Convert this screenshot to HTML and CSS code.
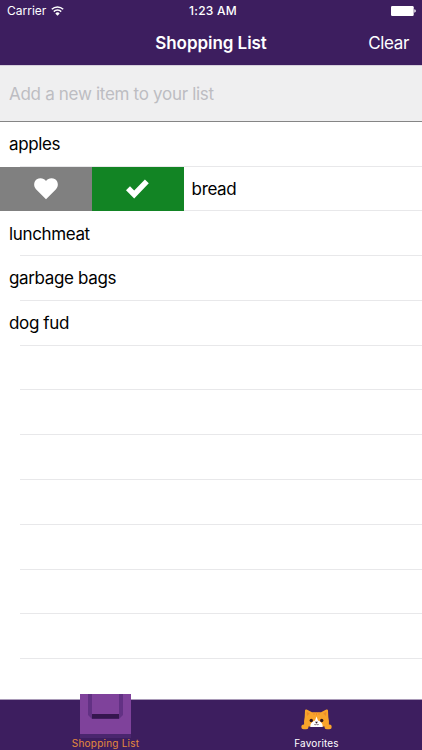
FILE: index.html
```html
<!DOCTYPE html>
<html lang="en">
<head>
  <meta charset="UTF-8" />
  <meta name="viewport" content="width=device-width, initial-scale=1.0"/>
  <title>Shopping List</title>
  <link rel="stylesheet" href="styles.css">
</head>
<body>
  <div class="app">
    <header>
      <div class="status-bar">
        <div class="carrier">
          <span class="carrier-name">Carrier</span>
          <svg class="wifi" width="13" height="10" viewBox="0 0 13 10">
            <path d="M.8 3.3a8.2 8.2 0 0 1 11.4 0M2.8 5.6a5.3 5.3 0 0 1 7.4 0" fill="none" stroke="#fff" stroke-width="1.5"/>
            <path d="M6.5 9.7L4.3 7.4a3.2 3.2 0 0 1 4.4 0z" fill="#fff"/>
          </svg>
        </div>
        <span class="time">1:23 AM</span>
        <svg class="battery" width="25" height="10" viewBox="0 0 25 10">
          <rect width="22.7" height="10" rx="1.2" fill="#fff"/>
          <path d="M23.3 3.3q1.5.3 1.5 1.7t-1.5 1.7z" fill="#fff"/>
        </svg>
      </div>
      <div class="nav-bar">
        <h1>Shopping List</h1>
        <button class="clear">Clear</button>
      </div>
    </header>

    <input type="text" class="new-item" placeholder="Add a new item to your list" />

    <ul class="list">
      <li>apples</li>
      <li class="swiped">
        <div class="action favorite">
          <svg width="24" height="22" viewBox="0 0 24 22">
            <path d="M12 21.3L2 11.3C-.8 8.3-.3 3.5 2.8 1.3 5.9-.7 9.9.1 12 3c2.1-2.9 6.1-3.7 9.2-1.7 3.1 2.2 3.6 7 .8 10z" fill="#fff"/>
          </svg>
        </div>
        <div class="action done">
          <svg width="23" height="20" viewBox="0 0 23 20">
            <path d="M0 11.3L4 7.3 8.2 11.5 18.9.5 22.8 4.3 8.2 19.5z" fill="#fff"/>
          </svg>
        </div>
        <span>bread</span>
      </li>
      <li>lunchmeat</li>
      <li>garbage bags</li>
      <li>dog fud</li>
      <li></li>
      <li></li>
      <li></li>
      <li></li>
      <li></li>
      <li></li>
      <li></li>
    </ul>

    <nav class="tab-bar">
      <a class="tab active">
        <svg class="bag" width="51" height="44" viewBox="0 0 51 44">
          <path d="M0 40h51v4H0z" fill="#4a266e"/>
          <path d="M0 0h51v40H0z" fill="#7f429b"/>
          <path d="M8 0h4v20h27V0h4v21l-4 4H12l-4-4z" fill="#623184"/>
          <path d="M12 20h27v4.7H12z" fill="#35164f"/>
        </svg>
        <span class="tab-label">Shopping List</span>
      </a>
      <a class="tab">
        <svg class="cat" width="31" height="21" viewBox="0 0 31 21">
          <path d="M4 1.5Q4.2 0 5.7.6L11 3.2h9L25.3.6q1.5-.6 1.7.9l.3 6.5q1 3.5.6 9.5H3.100q-.4-6 .6-9.500z" fill="#f9a42b"/>
          <path d="M5.700 2.800l3 1.700-2.700 2.500zM25.300 2.800l-3 1.700 2.700 2.500z" fill="#ec8a2c"/>
          <path d="M13 3.500v2.500M15.500 3.500v3M18 3.500v2.500" stroke="#ec8a2c" fill="none"/>
          <path d="M15.500 7.500l1.500 4q5 1.500 4.700 6.500H9.300Q9 13 14 11.500z" fill="#fff"/>
          <circle cx="10.300" cy="11.500" r="1.700" fill="#30151c"/>
          <circle cx="20.700" cy="11.500" r="1.700" fill="#30151c"/>
          <path d="M14 12.800h3l-1.500 1.700z" fill="#30151c"/>
          <path d="M13.300 15.500q1.500 1 2.200-.7.700 1.700 2.200.7" fill="none" stroke="#30151c" stroke-width=".6"/>
          <rect x=".3" y="15.500" width="7.200" height="4.700" rx="2.300" fill="#f9a42b"/>
          <rect x="23.500" y="15.500" width="7.200" height="4.700" rx="2.300" fill="#f9a42b"/>
        </svg>
        <span class="tab-label">Favorites</span>
      </a>
    </nav>
  </div>
</body>
</html>
```
FILE: styles.css
```css
* {
    box-sizing: border-box;
}

body {
    margin: 0;
    font-family: Inter, Roboto, sans-serif;
    background: white;
    color: #000;
}

.app {
    display: flex;
    flex-direction: column;
    height: 750px;
    overflow: hidden;
}

header {
    height: 65px;
    flex: none;
    background: #3d1e5f;
    color: white;
}

.status-bar {
    display: grid;
    grid-template-columns: 1fr auto 1fr;
    align-items: center;
    height: 21px;
    padding: 0 6px;
    font-size: 12px;
}

.carrier {
    display: flex;
    align-items: center;
    gap: 5px;
    padding-left: 1px;
}

.time {
    padding-left: 4px;
    font-weight: 500;
    letter-spacing: 0.25px;
}

.battery {
    justify-self: end;
}

.nav-bar {
    display: grid;
    grid-template-columns: 1fr auto 1fr;
    align-items: center;
    height: 43px;
    padding: 0 13px;
}

h1 {
    grid-column: 2;
    margin: 0;
    font-size: 17px;
    font-weight: 600;
    letter-spacing: -0.05px;
}

.clear {
    justify-self: end;
    padding: 0;
    border: none;
    background: none;
    color: white;
    font: inherit;
    font-size: 17px;
    letter-spacing: -0.35px;
}

.new-item {
    flex: none;
    width: 100%;
    height: 57px;
    margin-bottom: -0.3px;
    padding: 0 9px;
    border: none;
    border-top: 1px solid #d5cedb;
    border-bottom: 1px solid #858585;
    border-radius: 0;
    background: #efeff0;
    font: inherit;
    font-size: 17px;
    letter-spacing: -0.3px;
}

.new-item::placeholder {
    color: #bdbdc2;
}

.list {
    flex: 1;
    min-height: 0;
    margin: 0;
    padding: 0;
    list-style: none;
    font-size: 17px;
    letter-spacing: -0.36px;
}

.list li {
    display: flex;
    align-items: center;
    height: 44.8px;
    padding-left: 9px;
    background: linear-gradient(#e8e8ea, #e8e8ea) 20px 100% / 100% 1px no-repeat;
}

.list .swiped {
    align-items: stretch;
    padding-left: 0;
}

.swiped span {
    align-self: center;
    margin-left: 8px;
}

.action {
    display: flex;
    align-items: center;
    justify-content: center;
    width: 91.8px;
}

.favorite {
    background: #808080;
}

.done {
    background: #128424;
}

.tab-bar {
    display: flex;
    flex: none;
    height: 51px;
    background: #3d1e5f;
    border-top: 1px solid #a99ab8;
    color: white;
}

.tab {
    display: flex;
    flex: 1;
    flex-direction: column;
    align-items: center;
    justify-content: flex-end;
    padding-bottom: 1px;
    font-size: 10px;
    line-height: 12px;
    letter-spacing: 0.15px;
}

.active {
    color: #e58a3d;
    letter-spacing: 0.22px;
}

.bag {
    flex: none;
    margin-bottom: -1px;
}

.cat {
    margin-bottom: 7px;
}
```
